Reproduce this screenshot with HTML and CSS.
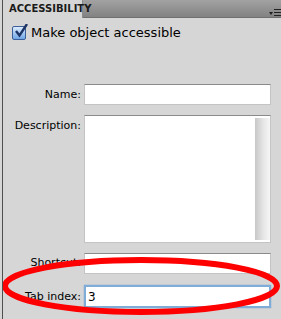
FILE: index.html
```html
<!DOCTYPE html>
<html lang="en">
<head>
    <meta charset="UTF-8">
    <title>Accessibility</title>
    <link rel="stylesheet" href="styles.css">
</head>
<body>
    <div class="panel">
        <div class="tabbar">
            <div class="tab">ACCESSIBILITY</div>
            <div class="menu">
                <svg width="14" height="10" viewBox="0 0 14 10">
                    <polygon points="0,4 4,4 2,7" fill="#222"/>
                    <rect x="5" y="1" width="9" height="1" fill="#222"/>
                    <rect x="5" y="4" width="9" height="1" fill="#222"/>
                    <rect x="5" y="7" width="9" height="1" fill="#222"/>
                </svg>
            </div>
        </div>

        <div class="content">
            <label class="check">
                <span class="box">
                    <svg width="15" height="15" viewBox="0 0 15 15">
                        <path d="M3 7 L6.5 11.5 L14 0" stroke="#1d3566" stroke-width="2.4" fill="none"/>
                    </svg>
                </span>
                Make object accessible
            </label>

            <div class="form">
                <label class="lbl name-lbl">Name:</label>
                <input type="text" class="field">

                <label class="lbl desc-lbl">Description:</label>
                <div class="area">
                    <div class="scroll"></div>
                </div>

                <label class="lbl short-lbl">Shortcut:</label>
                <input type="text" class="field short">

                <label class="lbl tab-lbl">Tab index:</label>
                <input type="text" class="field focus" value="3">
            </div>
        </div>

        <svg class="ring" width="284" height="70" viewBox="0 0 284 70">
            <ellipse cx="144" cy="33" rx="136" ry="26" fill="none" stroke="#ff0000" stroke-width="6"/>
        </svg>
    </div>
</body>
</html>
```

FILE: styles.css
```css
body {
    margin: 0;
    padding: 0;
    background-color: #d6d6d6;
    font-family: "DejaVu Sans", sans-serif;
    color: #000;
}

.panel {
    position: relative;
    width: 281px;
    height: 319px;
    margin-left: 2px;
    border-left: 1px solid #4f4f4f;
    box-sizing: border-box;
    overflow: hidden;
}

.tabbar {
    display: flex;
    height: 17px;
    background: linear-gradient(#a2a2a2, #828282);
    border-bottom: 1px solid #6f6f6f;
}

.tab {
    width: 80px;
    background-color: #d6d6d6;
    font-size: 10px;
    font-weight: bold;
    line-height: 18px;
    padding-left: 6px;
    box-sizing: border-box;
    border-right: 1px solid #8a8a8a;
    height: 18px;
    color: #1a1a1a;
}

.menu {
    margin-left: auto;
    padding: 3px 0 0 0;
}

.content {
    padding-top: 7px;
}

.check {
    display: flex;
    align-items: center;
    gap: 5px;
    padding-left: 9px;
    font-size: 13px;
}

.box {
    display: flex;
    width: 14px;
    height: 14px;
    border: 1px solid #3a5f9a;
    border-radius: 2px;
    background: linear-gradient(#dcecfc, #6fa6e6);
    box-sizing: border-box;
}

.box svg {
    margin: -3px 0 0 0;
    flex: none;
}

.form {
    display: grid;
    grid-template-columns: 78px 187px;
    column-gap: 3px;
    margin-top: 44px;
}

.lbl {
    text-align: right;
    font-size: 11px;
}

.name-lbl {
    padding-top: 4px;
}

.desc-lbl {
    padding-top: 4px;
    margin-top: 10px;
}

.short-lbl {
    padding-top: 3px;
    margin-top: 10px;
}

.tab-lbl {
    padding-top: 5px;
    margin-top: 11px;
}

.field {
    height: 21px;
    margin: 0;
    border: 1px solid #c4c4c4;
    border-top-color: #8a8a8a;
    background: #fff;
    box-sizing: border-box;
    font-family: "DejaVu Sans", sans-serif;
    font-size: 12px;
    padding: 0 2px;
}

.area {
    margin-top: 10px;
    height: 128px;
    background: #fff;
    border: 1px solid #c4c4c4;
    border-top-color: #8a8a8a;
    box-sizing: border-box;
    display: flex;
    justify-content: flex-end;
    padding: 2px 0 2px 0;
}

.scroll {
    width: 15px;
    background: linear-gradient(90deg, #c8c8c8, #e8e8e8 60%, #f6f6f6);
}

.short {
    margin-top: 10px;
}

.focus {
    margin-top: 11px;
    height: 23px;
    border: 2px solid #7fadd8;
    box-shadow: 0 0 1px #5f95cc;
}

.ring {
    position: absolute;
    left: -6px;
    top: 253px;
}
```
